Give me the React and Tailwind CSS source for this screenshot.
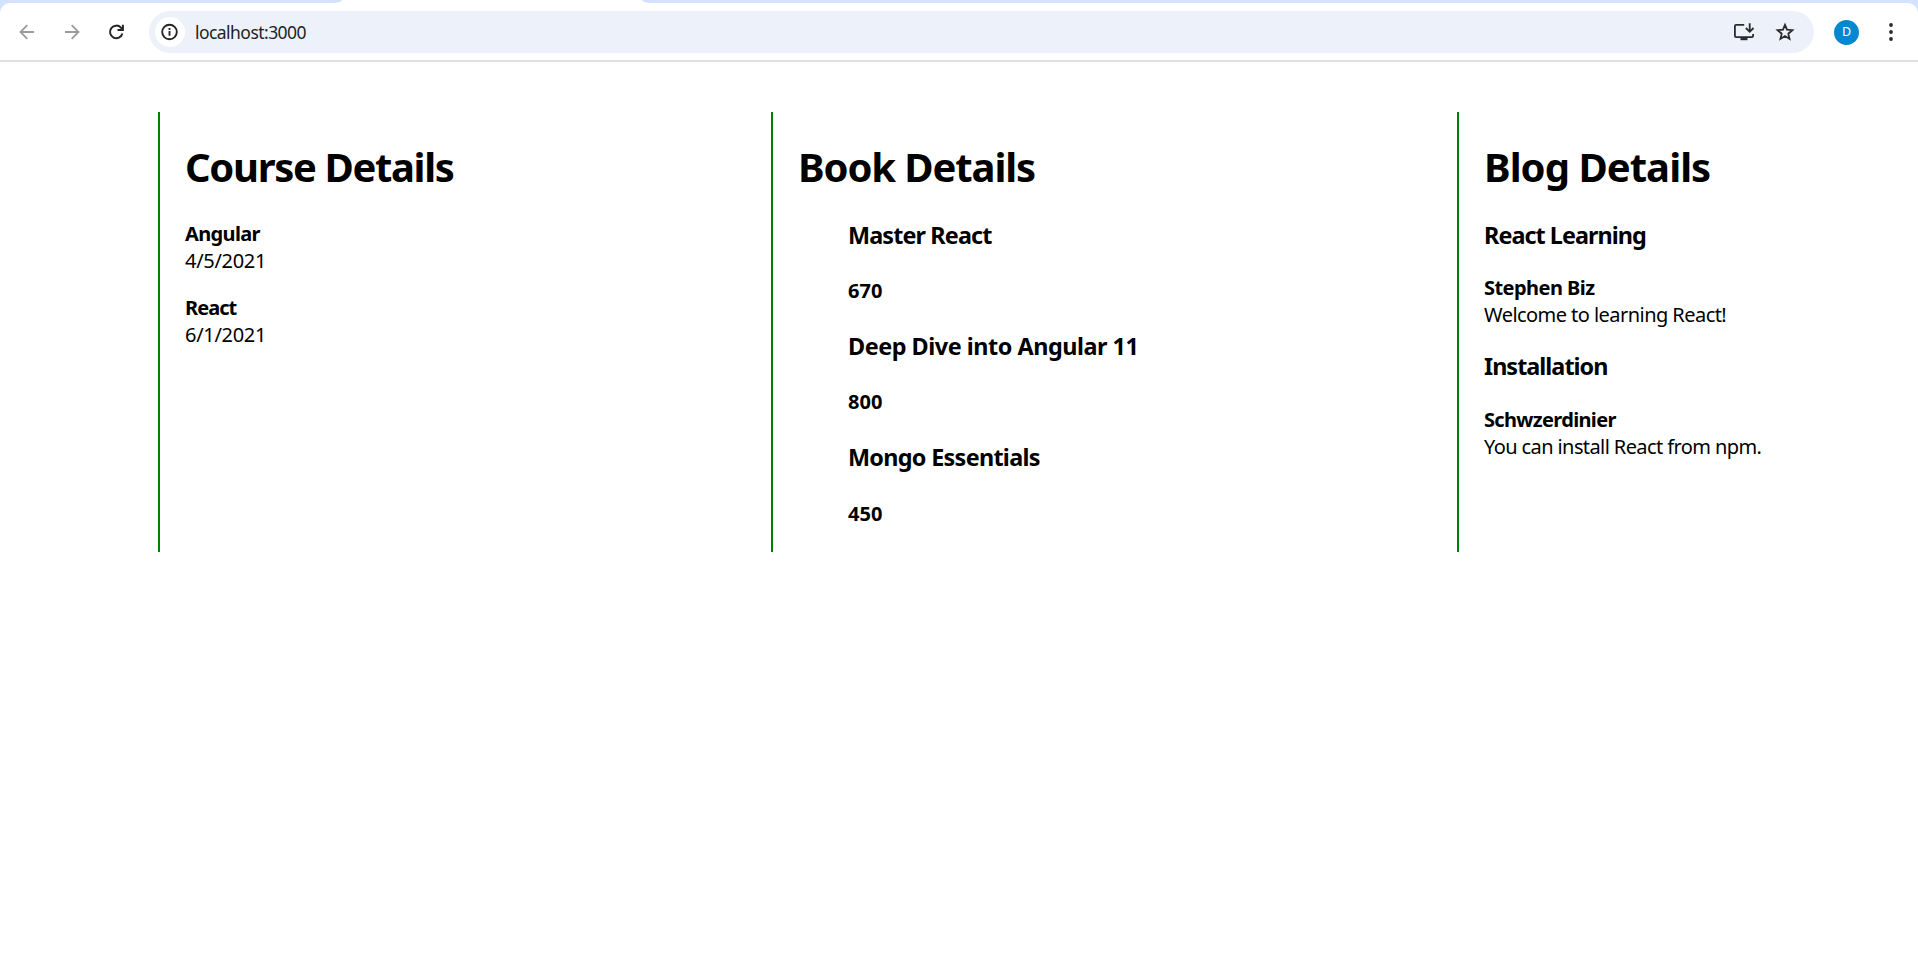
import React from "react";

const courses = [
  { name: "Angular", date: "4/5/2021", nameClass: "tracking-[-0.65px]" },
  { name: "React", date: "6/1/2021", nameClass: "tracking-[-0.95px]" },
];

const books = [
  { title: "Master React", price: "670", titleClass: "mb-[26px] tracking-[-0.87px]" },
  { title: "Deep Dive into Angular 11", price: "800", titleClass: "mb-[26px] tracking-[-0.47px]" },
  { title: "Mongo Essentials", price: "450", titleClass: "mb-[27px] tracking-[-0.7px]" },
];

const blogs = [
  {
    title: "React Learning",
    author: "Stephen Biz",
    text: "Welcome to learning React!",
    titleClass: "mb-[23px] tracking-[-0.96px]",
    authorClass: "tracking-[-0.55px]",
    textClass: "tracking-[-0.55px]",
  },
  {
    title: "Installation",
    author: "Schwzerdinier",
    text: "You can install React from npm.",
    titleClass: "mb-[24px] tracking-[-0.97px]",
    authorClass: "tracking-[-0.66px]",
    textClass: "tracking-[-0.6px]",
  },
];

function Arrow({ flip }) {
  return (
    <svg viewBox="0 0 16 16" className={flip ? "size-4 rotate-180" : "size-4"} fill="none" stroke="#9b9b9b" strokeWidth="1.8">
      <path d="M15 8H1.6M8.3 1.2L1.5 8l6.8 6.8" />
    </svg>
  );
}

function Toolbar() {
  return (
    <header className="bg-[#d3e3fd]">
      <div className="flex h-[3px] justify-between bg-white">
        <div className="w-[342px] rounded-br-[10px_3px] bg-[#d3e3fd]" />
        <div className="w-[1276px] rounded-bl-[10px_3px] bg-[#d3e3fd]" />
      </div>
      <div className="flex h-[59px] items-center rounded-t-[10px] border-b-2 border-[#e0e0e0] bg-white pt-[1px]">
        <div className="ml-[19px] flex w-[130px] items-center">
          <Arrow />
          <div className="ml-[29px]"><Arrow flip /></div>
          <svg viewBox="0 0 16 16" className="ml-[28px] size-4" fill="none" stroke="#262626" strokeWidth="2">
            <path d="M14.4 9.6A6.3 6.3 0 1 1 13 3.7L14.6 5.3" />
            <path d="M14.9 0.7V6.1H9.5" />
          </svg>
        </div>
        <div className="flex h-[42px] w-[1665px] items-center rounded-full bg-[#ecf1fa] pl-[6px]">
          <div className="flex size-[30px] items-center justify-center rounded-full bg-white">
            <svg viewBox="0 0 18 18" className="size-[18px]" fill="none" stroke="#262626" strokeWidth="1.9">
              <circle cx="8.5" cy="9" r="7.3" />
              <path d="M8.5 8v4.8M8.5 5.1v1.8" />
            </svg>
          </div>
          <span className="ml-[10px] text-[17.5px] tracking-[-0.55px] text-[#1f1f1f]">localhost:3000</span>
          <svg viewBox="0 0 22 20" className="mr-[20px] ml-auto h-5 w-[22px]" fill="none" stroke="#2b2b2b" strokeWidth="1.8">
            <path d="M11.2 2.8H3.2Q1.9 2.8 1.9 4.1V13.8Q1.9 15.1 3.2 15.1H18.8Q20.1 15.1 20.1 13.8V12" />
            <path d="M16.7 1.2V9.5M12.9 6l3.8 3.8L20.5 6" />
            <path d="M7.5 16.7h7" strokeWidth="3" />
          </svg>
          <svg viewBox="0 0 20 20" className="mr-[19px] size-5" fill="none" stroke="#2b2b2b" strokeWidth="1.8">
            <path d="M10 2.8l2 4.9 5.4.5-4.1 3.5 1.2 5.2L10 14.1l-4.5 2.8 1.2-5.2L2.6 8.2 8 7.7z" />
          </svg>
        </div>
        <div className="ml-5 flex size-[25px] items-center justify-center rounded-full bg-[#0288d1] text-[12.5px] text-white">D</div>
        <svg viewBox="0 0 4 18" className="ml-[30px] h-[18px] w-1" fill="#2b2b2b">
          <circle cx="2" cy="2" r="1.9" />
          <circle cx="2" cy="9" r="1.9" />
          <circle cx="2" cy="16" r="1.9" />
        </svg>
      </div>
    </header>
  );
}

function Column({ title, className, titleClass, children }) {
  return (
    <section className={"h-[440px] border-l-2 border-[#008000] pl-[25px] " + className}>
      <h1 className={"mt-7 mb-[27px] text-[40px] leading-[53px] font-bold " + titleClass}>{title}</h1>
      {children}
    </section>
  );
}

export default function App() {
  return (
    <div className="min-h-screen bg-white font-['Noto_Sans',sans-serif] whitespace-nowrap text-black">
      <Toolbar />
      <main className="flex pt-[50px] pl-[158px] text-[20px] leading-[27px]">
        <Column title="Course Details" className="w-[613px]" titleClass="tracking-[-1.35px]">
          {courses.map((c) => (
            <div key={c.name} className="mb-5">
              <h4 className={"font-bold " + c.nameClass}>{c.name}</h4>
              <p className="tracking-[-0.3px]">{c.date}</p>
            </div>
          ))}
        </Column>
        <Column title="Book Details" className="w-[686px]" titleClass="tracking-[-1.1px]">
          <div className="pl-[50px]">
            {books.map((b) => (
              <div key={b.title} className="mb-[27px]">
                <h3 className={"text-[23.4px] leading-[31px] font-bold " + b.titleClass}>{b.title}</h3>
                <h4 className="font-bold">{b.price}</h4>
              </div>
            ))}
          </div>
        </Column>
        <Column title="Blog Details" className="w-[461px]" titleClass="tracking-[-0.95px]">
          {blogs.map((b) => (
            <div key={b.title} className="mb-[23px]">
              <h3 className={"text-[23.4px] leading-[31px] font-bold " + b.titleClass}>{b.title}</h3>
              <h4 className={"font-bold " + b.authorClass}>{b.author}</h4>
              <p className={b.textClass}>{b.text}</p>
            </div>
          ))}
        </Column>
      </main>
    </div>
  );
}
